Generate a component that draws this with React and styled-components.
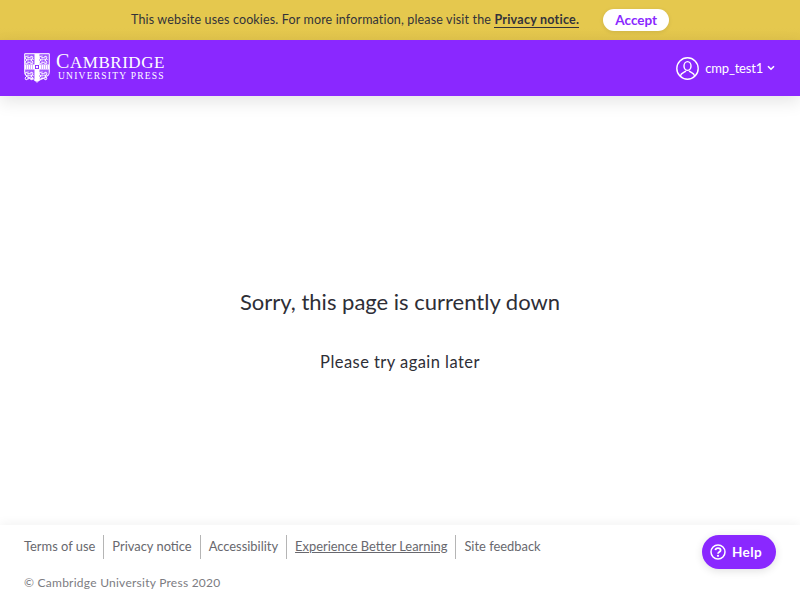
import React from "react";
import styled, { createGlobalStyle } from "styled-components";

const links = [
  { label: "Terms of use" },
  { label: "Privacy notice" },
  { label: "Accessibility" },
  { label: "Experience Better Learning", underline: true },
  { label: "Site feedback" },
];

const Lion = ({ x, y }) => (
  <g transform={`translate(${x} ${y})`} fill="none" stroke="#fff" strokeWidth="0.9">
    <path d="M0 1l3 2 3-2 1 2-2 2 2 2-1 2-3-2-3 2-1-2 2-2-2-2z" />
    <path d="M2 0v9M5 1v8M0 4.500h8" opacity="0.6" />
  </g>
);

const Shield = () => (
  <svg width="26" height="30" viewBox="0 0 26 30">
    <path
      d="M.7.7h24.600v18.500c0 4.500-4.800 5.800-8.800 6.800l-3.500 3.300-3.500-3.300c-4-1-8.800-2.300-8.800-6.800z"
      fill="rgba(255,255,255,0.22)"
      stroke="#fff"
      strokeWidth="1"
    />
    <Lion x={2} y={2} />
    <Lion x={16} y={2} />
    <Lion x={2} y={18} />
    <Lion x={16} y={18} />
    <path d="M10.500 1h5v27h-5zM1 11.500h24v5H1z" fill="#fff" />
    <path d="M2 13h7M2 15h7M17 13h7M17 15h7" stroke="#8a28ff" strokeWidth="0.7" strokeDasharray="1 1" />
    <rect x="11" y="12" width="4" height="4" fill="#8a28ff" />
    <circle cx="13" cy="14" r="1.200" fill="#fff" />
  </svg>
);

const UserIcon = () => (
  <svg width="23" height="23" viewBox="0 0 23 23" fill="none" stroke="#fff" strokeWidth="1.4">
    <circle cx="11.500" cy="11.500" r="10.700" />
    <ellipse cx="11.500" cy="9" rx="3.500" ry="4.400" />
    <path d="M4.400 19c.5-3.200 3.800-3.300 5.500-5M18.600 19c-.5-3.200-3.800-3.300-5.500-5" />
  </svg>
);

const Chevron = () => (
  <svg width="8" height="6" viewBox="0 0 8 6" fill="none" stroke="#fff" strokeWidth="1.6">
    <path d="M1 1.200l3 3 3-3" />
  </svg>
);

const HelpIcon = () => (
  <svg width="16" height="16" viewBox="0 0 16 16" fill="none" stroke="#fff">
    <circle cx="8" cy="8" r="7" strokeWidth="1.500" />
    <path d="M5.400 6.200C5.600 4.800 6.700 4.100 8 4.100c1.500 0 2.600.9 2.600 2.100 0 1.900-2.600 1.800-2.600 3.500" strokeWidth="1.800" />
    <circle cx="8" cy="11.800" r="1.100" fill="#fff" stroke="none" />
  </svg>
);

const App = () => {
  return (
    <Page>
      <GlobalStyle />
      <CookieBar>
        <CookieText>
          This website uses cookies. For more information, please visit the{" "}
          <CookieLink>Privacy notice.</CookieLink>
        </CookieText>
        <AcceptButton>Accept</AcceptButton>
      </CookieBar>
      <Header>
        <Logo>
          <Shield />
          <LogoText>
            <LogoTop>Cambridge</LogoTop>
            <LogoBottom>University Press</LogoBottom>
          </LogoText>
        </Logo>
        <UserMenu>
          <UserIcon />
          <UserName>cmp_test1</UserName>
          <Chevron />
        </UserMenu>
      </Header>
      <Main>
        <Title>Sorry, this page is currently down</Title>
        <Subtitle>Please try again later</Subtitle>
      </Main>
      <Footer>
        <FooterLinks>
          {links.map(({ label, underline }) => (
            <FooterLink key={label} $underline={underline}>
              {label}
            </FooterLink>
          ))}
        </FooterLinks>
        <Copyright>© Cambridge University Press 2020</Copyright>
        <HelpButton>
          <HelpIcon />
          Help
        </HelpButton>
      </Footer>
    </Page>
  );
};
export default App;

const GlobalStyle = createGlobalStyle`
  html, body {
    margin: 0;
    padding: 0;
    background: #fff;
  }
  * {
    box-sizing: border-box;
  }
`;
const Page = styled.div`
  width: 800px;
  height: 600px;
  display: flex;
  flex-direction: column;
  overflow: hidden;
  font-family: Lato, "Open Sans", sans-serif;
`;
const CookieBar = styled.div`
  height: 40px;
  flex-shrink: 0;
  display: flex;
  align-items: center;
  padding-left: 131px;
  background: linear-gradient(#e5c84e 70%, #e1c44c);
`;
const CookieText = styled.div`
  margin-top: -2px;
  font-size: 12.5px;
  color: #33333a;
  letter-spacing: 0.15px;
  white-space: nowrap;
`;
const CookieLink = styled.span`
  font-weight: 700;
  letter-spacing: 0.25px;
  border-bottom: 1px solid #33333a;
`;
const AcceptButton = styled.div`
  margin-left: 24px;
  width: 66px;
  height: 22px;
  border-radius: 11px;
  background: #fff;
  color: #8a28ff;
  font-size: 13.5px;
  font-weight: 700;
  display: flex;
  align-items: center;
  justify-content: center;
  box-shadow: 0 1px 4px rgba(0, 0, 0, 0.1);
`;
const Header = styled.div`
  height: 56px;
  flex-shrink: 0;
  display: flex;
  align-items: center;
  justify-content: space-between;
  padding: 0 25px 0 24px;
  background: #8a28ff;
  box-shadow: 0 6px 16px rgba(0, 0, 0, 0.1);
  position: relative;
`;
const Logo = styled.div`
  display: flex;
  align-items: center;
  gap: 6px;
  color: #fff;
`;
const LogoText = styled.div`
  display: flex;
  flex-direction: column;
  margin-top: -2px;
  font-family: "Liberation Serif", serif;
  text-transform: uppercase;
  white-space: nowrap;
`;
const LogoTop = styled.div`
  font-size: 17px;
  line-height: 16px;
  letter-spacing: 0.55px;
  font-variant: small-caps;
  &::first-letter {
    font-size: 20px;
  }
`;
const LogoBottom = styled.div`
  margin-left: 2px;
  font-size: 9.5px;
  line-height: 11px;
  letter-spacing: 1.24px;
`;
const UserMenu = styled.div`
  display: flex;
  align-items: center;
  color: #fff;
`;
const UserName = styled.span`
  margin: -1px 4px 0 6px;
  font-size: 13px;
  letter-spacing: -0.2px;
`;
const Main = styled.div`
  flex: 1;
  display: flex;
  flex-direction: column;
  align-items: center;
  padding-top: 191px;
  color: #2e2e36;
`;
const Title = styled.div`
  font-size: 22px;
  line-height: 30px;
`;
const Subtitle = styled.div`
  margin-top: 35px;
  font-size: 16.5px;
  line-height: 20px;
  letter-spacing: 0.45px;
`;
const Footer = styled.div`
  height: 75px;
  flex-shrink: 0;
  padding: 10px 24px 0;
  background: #fff;
  box-shadow: 0 -2px 10px rgba(0, 0, 0, 0.05);
  position: relative;
`;
const FooterLinks = styled.div`
  display: flex;
`;
const FooterLink = styled.div`
  height: 24px;
  display: flex;
  align-items: center;
  padding: 0 8px 2px;
  font-size: 12.9px;
  color: #68686e;
  border-left: 1px solid #b5b5b5;
  text-decoration: ${({ $underline }) => ($underline ? "underline" : "none")};
  &:first-child {
    padding-left: 0;
    border-left: none;
  }
`;
const Copyright = styled.div`
  margin-top: 16px;
  font-size: 12px;
  line-height: 16px;
  letter-spacing: 0.25px;
  color: #7c7c82;
`;
const HelpButton = styled.div`
  position: absolute;
  left: 702px;
  top: 10px;
  width: 74px;
  height: 34px;
  border-radius: 17px;
  background: #8a28ff;
  color: #fff;
  font-size: 13.5px;
  font-weight: 700;
  letter-spacing: 0.4px;
  display: flex;
  align-items: center;
  gap: 6px;
  padding-left: 8px;
  box-shadow: 0 2px 8px rgba(0, 0, 0, 0.12);
`;
